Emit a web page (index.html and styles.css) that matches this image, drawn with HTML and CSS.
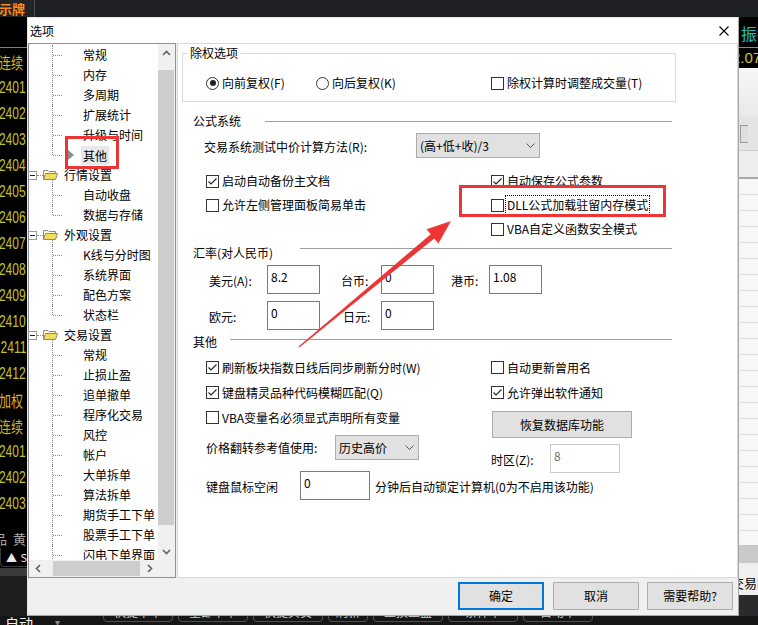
FILE: index.html
```html
<!DOCTYPE html>
<html lang="zh-CN">
<head>
<meta charset="utf-8">
<title>选项</title>
<link rel="stylesheet" href="styles.css">
</head>
<body>
<div class="app">
  <header class="topbar">
    <div class="tb-title">示牌</div>
    <div class="tb-rest"></div>
  </header>
  <div class="main">
    <aside class="left-strip">
      <div class="ls-head"></div>
      <div class="ls-list">
        <div class="ls-row ls-name"><span>连续</span></div>
        <div class="ls-row"><span>2401</span></div>
        <div class="ls-row"><span>2402</span></div>
        <div class="ls-row"><span>2403</span></div>
        <div class="ls-row"><span>2404</span></div>
        <div class="ls-row"><span>2405</span></div>
        <div class="ls-row"><span>2406</span></div>
        <div class="ls-row"><span>2407</span></div>
        <div class="ls-row"><span>2408</span></div>
        <div class="ls-row"><span>2409</span></div>
        <div class="ls-row"><span>2410</span></div>
        <div class="ls-row"><span>2411</span></div>
        <div class="ls-row"><span>2412</span></div>
        <div class="ls-row ls-name"><span>加权</span></div>
        <div class="ls-row ls-name"><span>连续</span></div>
        <div class="ls-row"><span>2401</span></div>
        <div class="ls-row"><span>2402</span></div>
        <div class="ls-row"><span>2403</span></div>
      </div>
      <div class="ls-tabs"><span>品</span><span>黄</span></div>
      <div class="ls-ctrl"><span>▲</span><span>S</span></div>
      <div class="ls-bar"></div>
    </aside>
    <div class="center-gap"></div>
    <aside class="right-strip">
      <div class="rs-head"><span>振幅</span></div>
      <div class="rs-val"><span>2.07</span></div>
      <div class="rs-grey"></div>
      <div class="rs-tool"><span class="rs-btn"></span></div>
      <div class="rs-sub"></div>
      <div class="rs-table"></div>
      <div class="rs-bar"></div>
      <div class="rs-foot"><span>交易时</span></div>
      <div class="rs-dark"></div>
    </aside>
  </div>
  <footer class="bottombar">
    <span class="bb-auto">自动</span>
    <span class="bb-drop">▾</span>
    <span class="bb-btn bb-w70">快捷下单</span>
    <span class="bb-btn bb-w70">全部下单</span>
    <span class="bb-btn bb-w70">快捷买卖</span>
    <span class="bb-btn bb-w40">刷新</span>
    <span class="bb-btn bb-w70">止损止盈</span>
    <span class="bb-btn bb-w70">条件单</span>
    <span class="bb-btn bb-w70">自动单</span>
  </footer>

  <div class="dialog">
    <div class="titlebar">
      <span class="title">选项</span>
      <svg class="close" width="10" height="10" viewBox="0 0 10 10"><path d="M0.5 0.5L9.5 9.5M9.5 0.5L0.5 9.5" stroke="#000" stroke-width="1.1" fill="none"/></svg>
    </div>
    <div class="dlg-body">
      <div class="tree">
        <div class="tree-view">
          <ul class="tree-list">
            <li class="ti child">常规</li>
            <li class="ti child">内存</li>
            <li class="ti child">多周期</li>
            <li class="ti child">扩展统计</li>
            <li class="ti child">升级与时间</li>
            <li class="ti child last sel"><span class="sel-arrow"></span><span class="sel-text">其他</span></li>
            <li class="ti parent"><span class="exp"></span><span class="conn"></span><svg class="folder" width="15" height="10" viewBox="0 0 15 10"><path d="M0.5 9.5V0.5H5L6 1.5H12.5V3.5" fill="#fffbe0" stroke="#8c8a7c"/><path d="M0.5 9.5L2.5 3.5H14.5L12.5 9.5Z" fill="#f2dc5a" stroke="#8c8a7c"/></svg><span class="ptext">行情设置</span></li>
            <li class="ti child">自动收盘</li>
            <li class="ti child last">数据与存储</li>
            <li class="ti parent"><span class="exp"></span><span class="conn"></span><svg class="folder" width="15" height="10" viewBox="0 0 15 10"><path d="M0.5 9.5V0.5H5L6 1.5H12.5V3.5" fill="#fffbe0" stroke="#8c8a7c"/><path d="M0.5 9.5L2.5 3.5H14.5L12.5 9.5Z" fill="#f2dc5a" stroke="#8c8a7c"/></svg><span class="ptext">外观设置</span></li>
            <li class="ti child">K线与分时图</li>
            <li class="ti child">系统界面</li>
            <li class="ti child">配色方案</li>
            <li class="ti child last">状态栏</li>
            <li class="ti parent"><span class="exp"></span><span class="conn"></span><svg class="folder" width="15" height="10" viewBox="0 0 15 10"><path d="M0.5 9.5V0.5H5L6 1.5H12.5V3.5" fill="#fffbe0" stroke="#8c8a7c"/><path d="M0.5 9.5L2.5 3.5H14.5L12.5 9.5Z" fill="#f2dc5a" stroke="#8c8a7c"/></svg><span class="ptext">交易设置</span></li>
            <li class="ti child">常规</li>
            <li class="ti child">止损止盈</li>
            <li class="ti child">追单撤单</li>
            <li class="ti child">程序化交易</li>
            <li class="ti child">风控</li>
            <li class="ti child">帐户</li>
            <li class="ti child">大单拆单</li>
            <li class="ti child">算法拆单</li>
            <li class="ti child">期货手工下单</li>
            <li class="ti child">股票手工下单</li>
            <li class="ti child">闪电下单界面</li>
          </ul>
        </div>
        <div class="vscroll">
          <span class="sb-btn"><svg width="9" height="6" viewBox="0 0 9 6"><polyline points="1,5 4.5,1.5 8,5" fill="none" stroke="#606060" stroke-width="1.6"/></svg></span>
          <span class="sb-track"><span class="sb-thumb"></span></span>
          <span class="sb-btn"><svg width="9" height="6" viewBox="0 0 9 6"><polyline points="1,1 4.5,4.5 8,1" fill="none" stroke="#606060" stroke-width="1.6"/></svg></span>
        </div>
        <div class="hscroll">
          <span class="sb-btn"><svg width="6" height="9" viewBox="0 0 6 9"><polyline points="5,1 1.5,4.5 5,8" fill="none" stroke="#606060" stroke-width="1.6"/></svg></span>
          <span class="sb-track"><span class="sb-thumb"></span></span>
          <span class="sb-btn"><svg width="6" height="9" viewBox="0 0 6 9"><polyline points="1,1 4.5,4.5 1,8" fill="none" stroke="#606060" stroke-width="1.6"/></svg></span>
        </div>
        <div class="sb-corner"></div>
      </div>

      <div class="panel">
        <fieldset class="grp">
          <legend>除权选项</legend>
          <div class="grp-row">
            <span class="opt w110"><span class="radio on"></span>向前复权(F)</span>
            <span class="opt w175"><span class="radio"></span>向后复权(K)</span>
            <span class="opt"><span class="box"></span>除权计算时调整成交量(T)</span>
          </div>
        </fieldset>

        <div class="sec sec-formula"><span class="sec-label">公式系统</span><span class="sec-line"></span></div>
        <div class="row-method">
          <span class="lbl">交易系统测试中价计算方法(R):</span>
          <span class="select sel-method"><span>(高+低+收)/3</span><svg width="9" height="5" viewBox="0 0 9 5"><polyline points="0.5,0.5 4.5,4.5 8.5,0.5" fill="none" stroke="#555" stroke-width="1"/></svg></span>
        </div>
        <div class="cb-rows">
          <div class="cb-row">
            <span class="opt col-l"><span class="box"><svg width="11" height="11" viewBox="0 0 11 11"><polyline points="1.5,5.5 4,8 9.5,2.5" fill="none" stroke="#222" stroke-width="1.1"/></svg></span>启动自动备份主文档</span>
            <span class="opt"><span class="box"><svg width="11" height="11" viewBox="0 0 11 11"><polyline points="1.5,5.5 4,8 9.5,2.5" fill="none" stroke="#222" stroke-width="1.1"/></svg></span>自动保存公式参数</span>
          </div>
          <div class="cb-row">
            <span class="opt col-l"><span class="box"></span>允许左侧管理面板简易单击</span>
            <span class="opt"><span class="box"></span><span class="focus">DLL公式加载驻留内存模式</span></span>
          </div>
          <div class="cb-row">
            <span class="col-l"></span>
            <span class="opt"><span class="box"></span>VBA自定义函数安全模式</span>
          </div>
        </div>

        <div class="sec sec-rate"><span class="sec-label">汇率(对人民币)</span><span class="sec-line"></span></div>
        <div class="rate-row rate-row1">
          <span class="rl rl1">美元(A):</span><span class="inp">8.2</span>
          <span class="rl rl2">台币:</span><span class="inp">0</span>
          <span class="rl rl3">港币:</span><span class="inp">1.08</span>
        </div>
        <div class="rate-row rate-row2">
          <span class="rl rl1">欧元:</span><span class="inp">0</span>
          <span class="rl rl2 rl2b">日元:</span><span class="inp">0</span>
        </div>

        <div class="sec sec-other"><span class="sec-label">其他</span><span class="sec-line"></span></div>
        <div class="lower">
          <div class="col-l">
            <div class="lrow"><span class="opt"><span class="box"><svg width="11" height="11" viewBox="0 0 11 11"><polyline points="1.5,5.5 4,8 9.5,2.5" fill="none" stroke="#222" stroke-width="1.1"/></svg></span>刷新板块指数日线后同步刷新分时(W)</span></div>
            <div class="lrow"><span class="opt"><span class="box"><svg width="11" height="11" viewBox="0 0 11 11"><polyline points="1.5,5.5 4,8 9.5,2.5" fill="none" stroke="#222" stroke-width="1.1"/></svg></span>键盘精灵品种代码模糊匹配(Q)</span></div>
            <div class="lrow"><span class="opt"><span class="box"></span>VBA变量名必须显式声明所有变量</span></div>
            <div class="row-price">
              <span class="lbl-price">价格翻转参考值使用:</span>
              <span class="select sel-price"><span>历史高价</span><svg width="9" height="5" viewBox="0 0 9 5"><polyline points="0.5,0.5 4.5,4.5 8.5,0.5" fill="none" stroke="#555" stroke-width="1"/></svg></span>
            </div>
            <div class="row-idle">
              <span class="lbl-idle">键盘鼠标空闲</span>
              <span class="inp inp-wide">0</span>
              <span class="idle-tail">分钟后自动锁定计算机(0为不启用该功能)</span>
            </div>
          </div>
          <div class="col-r">
            <div class="lrow"><span class="opt"><span class="box"></span>自动更新曾用名</span></div>
            <div class="lrow"><span class="opt"><span class="box"><svg width="11" height="11" viewBox="0 0 11 11"><polyline points="1.5,5.5 4,8 9.5,2.5" fill="none" stroke="#222" stroke-width="1.1"/></svg></span>允许弹出软件通知</span></div>
            <div class="btn btn-restore">恢复数据库功能</div>
            <div class="row-tz">
              <span class="lbl-tz">时区(Z):</span>
              <span class="inp inp-wide inp-dis">8</span>
            </div>
          </div>
        </div>
      </div>
    </div>
    <div class="footer">
      <div class="btn btn-foot btn-default">确定</div>
      <div class="btn btn-foot">取消</div>
      <div class="btn btn-foot">需要帮助?</div>
    </div>

    <div class="mark mark-tree"></div>
    <div class="mark mark-dll"></div>
    <svg class="arrow" width="710" height="597" viewBox="28 18 710 597">
      <polygon points="299.4,347.6 434.3,238.4 438.4,243.4 451,221 426.6,229.2 430.7,234.2 298.6,346.4" fill="#ee3535"/>
    </svg>
  </div>
</div>
</body>
</html>
```

FILE: styles.css
```css
* { box-sizing: border-box; }
html, body { margin: 0; padding: 0; }
body {
  width: 758px; height: 625px; overflow: hidden; background: #000;
  font-family: "Noto Sans CJK SC", "Noto Sans", sans-serif;
  font-size: 12px; line-height: 16px; color: #000;
}
.app { position: relative; width: 758px; height: 625px; display: grid; grid-template-rows: 17px 599px 9px; }

/* ---------- background application ---------- */
.topbar { display: flex; background: #232427; }
.tb-title {
  width: 35px; height: 17px; padding-right: 9px; border-right: 1px solid #4d4d50;
  display: flex; justify-content: flex-end; overflow: hidden; white-space: nowrap;
  color: #ff8b17; font-weight: 700; font-size: 13px; line-height: 17px;
}
.tb-rest { flex: 1; background: #1f2024; }

.main { display: grid; grid-template-columns: 27px 712px 19px; overflow: hidden; }
.left-strip { background: #000; display: flex; flex-direction: column; overflow: hidden; }
.ls-head { height: 31px; flex: none; border-bottom: 1px solid #18a8b4; }
.ls-list { margin-top: 1px; flex: none; }
.ls-row {
  height: 26px; display: flex; justify-content: flex-end; align-items: center;
  overflow: hidden; white-space: nowrap; padding-right: 1px;
  font-family: "Liberation Sans", Arial, sans-serif; font-size: 16px; color: #c3c32a;
}
.ls-row span { display: inline-block; transform: scaleX(.75); transform-origin: right center; }
.ls-name { padding-right: 4px; color: #d8b11c; font-family: "Noto Sans CJK SC", sans-serif; }
.ls-tabs {
  margin-top: 13px; height: 18px; flex: none; display: flex; justify-content: space-between;
  overflow: hidden; color: #a8a8a8; font-size: 13px; line-height: 18px; padding: 0 1px 0 0; margin-left: -6px;
}
.ls-ctrl {
  height: 19px; flex: none; display: flex; justify-content: space-between; align-items: center;
  color: #e8e8e8; font-size: 11px; padding: 0 0 0 5px; border-bottom: 1px solid #3a3a3a;
  border-left: 1px solid #3a3a3a; border-radius: 0 0 0 4px;
}
.ls-bar { height: 8px; flex: none; background: #3b3b3b; margin-top: 1px; }
.left-strip::after { content: ""; flex: 1; background: #1e1e1e; }

.right-strip { display: flex; flex-direction: column; overflow: hidden; background: #f0f0f0; }
.rs-head {
  height: 31px; flex: none; background: #000; border-bottom: 1px solid #1fb4bd;
  color: #22c0c8; font-size: 16px; line-height: 20px; padding: 6px 0 0 2px; white-space: nowrap; overflow: hidden;
}
.rs-val {
  height: 20px; flex: none; background: #000; color: #c8c832; white-space: nowrap; overflow: hidden;
  font-family: "Liberation Sans", Arial, sans-serif; font-size: 15px; line-height: 20px;
}
.rs-val span { display: inline-block; margin-left: -7px; }
.rs-grey { height: 49px; flex: none; background: linear-gradient(#f6f6f6, #e9e9e9); }
.rs-tool { height: 33px; flex: none; background: #e4e4e4; padding: 8px 0 0 1px; }
.rs-btn { display: block; width: 8px; height: 18px; border: 1px solid #9c9c9c; border-right: none; background: #dedede; }
.rs-sub { height: 27px; flex: none; background: #eeeeee; border-top: 1px solid #cfcfcf; }
.rs-table {
  height: 368px; flex: none; border-top: 2px solid #a9a9a9;
  background: repeating-linear-gradient(to bottom, #f7f7f7 0, #f7f7f7 15px, #dedede 15px, #dedede 16px);
}
.rs-bar { height: 18px; flex: none; background: #c9c9c9; }
.rs-foot { height: 32px; flex: none; background: #efefef; white-space: nowrap; overflow: hidden; font-size: 13px; line-height: 32px; padding-top: 4px; }
.rs-foot span { display: inline-block; margin-left: -8px; line-height: 24px; }
.rs-dark { height: 21px; flex: none; background: #2b2b2d; }

.bottombar { background: #161617; display: flex; align-items: flex-start; overflow: hidden; white-space: nowrap; }
.bb-auto { color: #f2f2f2; font-size: 14px; line-height: 14px; margin: 0 0 0 5px; width: 50px; flex: none; }
.bb-drop { color: #888; font-size: 10px; line-height: 10px; width: 48px; flex: none; margin-top: 1px; }
.bb-btn {
  flex: none; height: 20px; margin-top: -14px; margin-right: 5px; border: 1px solid #505052; border-radius: 4px;
  color: #cfcfcf; font-size: 12px; line-height: 18px; text-align: center;
}
.bb-w70 { width: 70px; }
.bb-w40 { width: 40px; }

/* ---------- dialog ---------- */
.dialog {
  position: absolute; left: 27px; top: 17px; width: 712px; height: 599px;
  background: #f0f0f0; border: 1px solid #a6a6a6; border-left-color: #e6e6e6; border-top-color: #e6e6e6;
  display: flex; flex-direction: column;
}
.titlebar { height: 25px; flex: none; background: #fff; display: flex; align-items: center; justify-content: space-between; padding: 0 9px 0 2px; }
.title { line-height: 16px; }
.close { display: block; margin-top: 1px; }

.dlg-body { height: 535px; flex: none; display: flex; gap: 1px; }

/* tree */
.tree {
  width: 148px; flex: none; border: 1px solid #8e9199; background: #fff;
  display: grid; grid-template-columns: 129px 17px; grid-template-rows: 516px 17px;
}
.tree-view { overflow: hidden; background: #fff; }
.tree-list { list-style: none; margin: 1px 0 0; padding: 0; }
.ti { position: relative; height: 20px; line-height: 20px; white-space: nowrap; }
.ti.child { padding-left: 54px; }
.ti.child::before { content: ""; position: absolute; left: 23px; top: 0; bottom: 0; border-left: 1px dotted #8a8a8a; }
.ti.child.last::before { bottom: 10px; }
.ti.child::after { content: ""; position: absolute; left: 24px; top: 10px; width: 9px; border-top: 1px dotted #8a8a8a; }
.ti.sel { padding-left: 39px; display: flex; align-items: center; }
.sel-arrow {
  width: 0; height: 0; margin-right: 7px; flex: none;
  border-top: 5px solid transparent; border-bottom: 5px solid transparent; border-left: 6px solid #8c8c8c;
}
.sel-text { display: block; height: 19px; line-height: 19px; padding: 0 2px; background: #e8e8e8; margin-top: 1px; }
.ti.parent { display: flex; align-items: center; }
.ti.parent::after { content: ""; position: absolute; left: 23px; top: 15px; height: 5px; border-left: 1px dotted #8a8a8a; }
.exp { position: relative; width: 9px; height: 9px; margin-left: -1px; flex: none; border: 1px solid #9a9a9a; background: #fff; }
.exp::after { content: ""; position: absolute; left: 1px; top: 3px; width: 5px; height: 1px; background: #222; }
.conn { width: 6px; flex: none; border-top: 1px dotted #8a8a8a; }
.folder { display: block; flex: none; }
.ptext { margin-left: 6px; }

.vscroll { background: #f0f0f0; display: flex; flex-direction: column; }
.hscroll { background: #f0f0f0; display: flex; }
.sb-btn { width: 17px; height: 17px; flex: none; display: flex; align-items: center; justify-content: center; }
.sb-btn svg { display: block; }
.sb-track { flex: 1; display: flex; }
.vscroll .sb-track { flex-direction: column; }
.vscroll .sb-thumb { display: block; margin: 9px 1px 0 0; height: 455px; background: #cdcdcd; }
.hscroll .sb-thumb { display: block; margin: 1px 0 0 7px; width: 87px; height: 15px; background: #cdcdcd; }
.sb-corner { background: #f0f0f0; }

/* right panel */
.panel { flex: 1; background: #fff; border: 1px solid #d9d9d9; }

.grp { margin: 1px 0 0 4px; width: 494px; min-width: 0; padding: 0 0 9px 5px; border: 1px solid #dcdcdc; }
.grp legend { padding: 0 2px; line-height: 16px; height: 16px; }
.grp-row { display: flex; align-items: center; height: 18px; margin: 13px 0 0 18px; }

.opt { display: flex; align-items: center; gap: 3px; white-space: nowrap; }
.w110 { width: 110px; flex: none; }
.w175 { width: 175px; flex: none; }
.radio {
  width: 13px; height: 13px; flex: none; border: 1px solid #333; border-radius: 50%; background: #fff;
  display: flex; align-items: center; justify-content: center;
}
.radio.on::after { content: ""; width: 6px; height: 6px; border-radius: 50%; background: #222; }
.box { width: 13px; height: 13px; flex: none; border: 1px solid #333; background: #fff; }
.box svg { display: block; }
.focus { outline: 1px dotted #000; outline-offset: 1px; margin-left: 0; line-height: 16px; }

.sec { display: flex; align-items: flex-start; width: 479px; margin-left: 15px; height: 16px; line-height: 16px; }
.sec-label { flex: none; }
.sec-line { flex: 1; height: 1px; background: #a0a0a0; margin-top: 8px; }
.sec-formula { margin-top: 11px; }
.sec-formula .sec-label { width: 72px; }
.sec-rate { margin-top: 4px; }
.sec-rate .sec-label { width: 107px; }
.sec-rate .sec-line { margin-top: 3px; }
.sec-other { margin-top: 4px; }
.sec-other .sec-label { width: 37px; }
.sec-other .sec-line { margin-top: 5px; }

.row-method { display: flex; align-items: center; height: 25px; margin: 4px 0 0 26px; }
.row-method .lbl { width: 212px; flex: none; padding-top: 2px; }
.select {
  display: flex; align-items: center; justify-content: space-between; height: 25px; flex: none;
  background: #e1e1e1; border: 1px solid #adadad; padding: 0 4px 0 3px; white-space: nowrap;
}
.select svg { display: block; }
.sel-method { width: 124px; }
.sel-price { width: 84px; }

.cb-rows { margin: 11px 0 0 28px; }
.cb-row { display: flex; align-items: center; height: 24px; }
.col-l { width: 285px; flex: none; }

.rate-row { display: flex; align-items: center; height: 29px; margin-left: 31px; }
.rate-row1 { margin-top: 4px; }
.rate-row2 { margin-top: 7px; }
.rl { flex: none; padding-top: 3px; white-space: nowrap; }
.rl1 { width: 58px; }
.rl2 { width: 61px; padding-left: 21px; }
.rl2b { padding-left: 23px; }
.rl3 { width: 55px; padding-left: 17px; }
.inp {
  width: 53px; height: 29px; flex: none; border: 1px solid #7a7a7a; background: #fff;
  padding: 3px 0 0 3px; line-height: 16px; align-self: flex-start;
}
.inp-wide { width: 70px; }
.inp-dis { border-color: #cccccc; color: #6d6d6d; }

.lower { display: flex; margin: 5px 0 0 28px; }
.lower .col-r { flex: 1; }
.lrow { height: 25px; display: flex; align-items: center; }
.row-price { display: flex; align-items: center; height: 25px; margin-top: 5px; }
.lbl-price { width: 129px; flex: none; white-space: nowrap; padding-top: 1px; }
.row-idle { display: flex; align-items: center; height: 29px; margin-top: 11px; white-space: nowrap; }
.lbl-idle { width: 94px; flex: none; padding-top: 2px; }
.row-idle .inp { align-self: auto; }
.idle-tail { margin-left: 5px; padding-top: 3px; }

.btn {
  display: flex; align-items: center; justify-content: center; background: #e1e1e1;
  border: 1px solid #adadad; white-space: nowrap;
}
.btn-restore { width: 140px; height: 27px; margin: 6px 0 0 1px; padding-top: 1px; }
.row-tz { display: flex; align-items: center; height: 29px; margin-top: 6px; }
.lbl-tz { width: 59px; flex: none; padding-top: 2px; }

.footer { flex: 1; display: flex; justify-content: flex-end; align-items: flex-start; gap: 8px; padding: 4px 5px 0 0; }
.btn-foot { width: 86px; height: 28px; }
.btn-default { border: 2px solid #0078d7; margin-right: 1px; }

/* annotations */
.mark { position: absolute; border: 3px solid #ee3535; }
.mark-tree { left: 37px; top: 118px; width: 54px; height: 33px; }
.mark-dll { left: 431px; top: 167px; width: 207px; height: 32px; }
.arrow { position: absolute; left: 0; top: 0; pointer-events: none; }
```
